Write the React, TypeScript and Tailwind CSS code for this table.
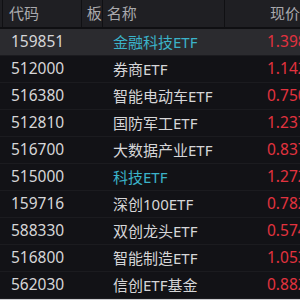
const rows = [
  { code: "159851", name: "金融科技ETF", price: "1.398", hl: true },
  { code: "512000", name: "券商ETF", price: "1.142" },
  { code: "516380", name: "智能电动车ETF", price: "0.750" },
  { code: "512810", name: "国防军工ETF", price: "1.237" },
  { code: "516700", name: "大数据产业ETF", price: "0.837" },
  { code: "515000", name: "科技ETF", price: "1.272", hl: true },
  { code: "159716", name: "深创100ETF", price: "0.782" },
  { code: "588330", name: "双创龙头ETF", price: "0.574" },
  { code: "516800", name: "智能制造ETF", price: "1.053" },
  { code: "562030", name: "信创ETF基金", price: "0.882" },
];

export default function App() {
  return (
    <div
      className="w-[300px] h-[300px] overflow-hidden bg-[#121216] text-[15px] flex flex-col"
      style={{ fontFamily: "'Noto Sans', 'Noto Sans CJK SC', sans-serif" }}
    >
      {/* header */}
      <div className="flex h-[27px] shrink-0 bg-[#1f1f23] text-[#a9a9ad] border-b-2 border-[#0f0f12] box-content">
        <div className="w-[3px] border-r border-[#101013]" />
        <div className="w-[83px] pl-[6px] flex items-center border-r border-[#101013]">代码</div>
        <div className="w-[22px] pl-[5px] flex items-center border-r border-[#101013]">板</div>
        <div className="w-[129px] pl-[4px] flex items-center border-r border-[#101013]">名称</div>
        <div className="flex-1 flex items-center pl-[45px] whitespace-nowrap">现价</div>
      </div>

      {/* rows */}
      {rows.map((r) => (
        <div
          key={r.code}
          className={`flex h-[27px] shrink-0 items-center border-b border-[#1b1b1f] whitespace-nowrap ${
            r.code === "159851" ? "bg-[#2b2b2f]" : ""
          }`}
        >
          <div className="w-[113px] shrink-0 pl-[11px] text-[15.5px] text-[#d6d6d8]">{r.code}</div>
          <div className={`w-[154px] shrink-0 ${r.hl ? "text-[#3bb3c9]" : "text-[#d6d6d8]"}`}>{r.name}</div>
          <div className="shrink-0 text-[15.5px] text-[#e2323f]">{r.price}</div>
        </div>
      ))}
      <div className="h-[1px] bg-[#cfcfd2] shrink-0" />
    </div>
  );
}
